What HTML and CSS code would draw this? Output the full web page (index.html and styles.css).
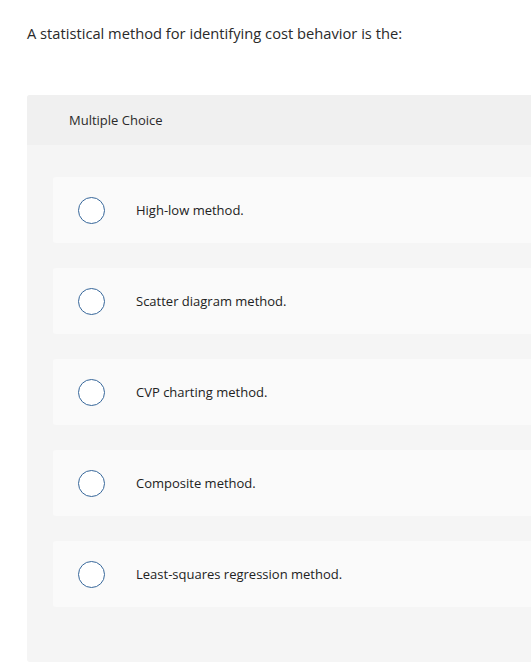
FILE: index.html
```html
<!DOCTYPE html>
<html>
<head>
<meta charset="utf-8">
<link rel="stylesheet" href="styles.css">
</head>
<body>
<div class="page">
  <p class="question">A statistical method for identifying cost behavior is the:</p>
  <div class="box">
    <div class="box-head">Multiple Choice</div>
    <div class="box-body">
      <div class="option"><span class="radio"></span><span class="label">High-low method.</span></div>
      <div class="option"><span class="radio"></span><span class="label">Scatter diagram method.</span></div>
      <div class="option"><span class="radio"></span><span class="label">CVP charting method.</span></div>
      <div class="option"><span class="radio"></span><span class="label">Composite method.</span></div>
      <div class="option"><span class="radio"></span><span class="label">Least-squares regression method.</span></div>
    </div>
  </div>
</div>
</body>
</html>
```
FILE: styles.css
```css
html, body {
  margin: 0;
  padding: 0;
  overflow: hidden;
  background: #ffffff;
}
.page {
  padding-left: 27px;
  font-family: "Open Sans", "Liberation Sans", sans-serif;
  color: #222222;
}
.question {
  margin: 0;
  padding-top: 23px;
  height: 95px;
  box-sizing: border-box;
  font-size: 14.7px;
  line-height: 20px;
  color: #2a2a2a;
}
.box {
  width: 540px;
  background: #f5f5f5;
  border-radius: 3px;
  overflow: hidden;
}
.box-head {
  height: 50px;
  background: #f0f0f0;
  padding-left: 42px;
  display: flex;
  align-items: center;
  font-size: 13px;
  color: #2a2a2a;
}
.box-body {
  padding: 32px 0 55px 26px;
  display: flex;
  flex-direction: column;
  gap: 25px;
}
.option {
  height: 66px;
  background: #fafafa;
  border-radius: 3px;
  display: flex;
  align-items: center;
  padding-left: 25px;
}
.radio {
  width: 25px;
  height: 25px;
  border: 1.5px solid #37679a;
  border-radius: 50%;
  background: #ffffff;
  flex: none;
}
.label {
  margin-left: 31px;
  font-size: 13px;
  color: #222222;
}
```
